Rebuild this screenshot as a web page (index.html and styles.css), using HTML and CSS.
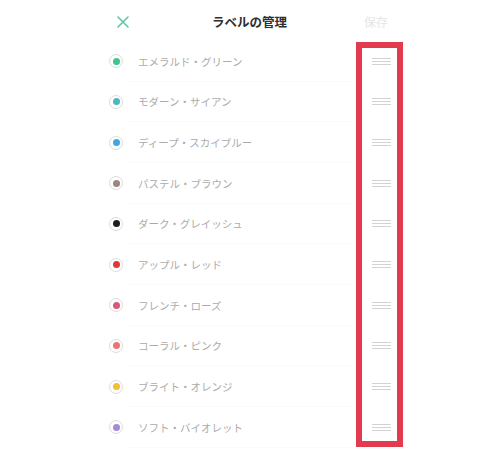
FILE: index.html
```html
<!DOCTYPE html>
<html lang="ja">
<head>
<meta charset="utf-8">
<title>ラベルの管理</title>
<link rel="stylesheet" href="styles.css">
</head>
<body>
<div class="screen">
  <header class="bar">
    <span class="close" aria-label="閉じる">
      <svg width="12" height="12" viewBox="0 0 12 12"><path d="M1 1L11 11M11 1L1 11" stroke="#5dc7a2" stroke-width="1.6" stroke-linecap="round"/></svg>
    </span>
    <h1 class="title">ラベルの管理</h1>
    <span class="save">保存</span>
  </header>
  <ul class="list">
    <li class="row"><span class="radio"><span class="dot c1"></span></span><span class="name">エメラルド・グリーン</span><span class="handle"></span></li>
    <li class="row"><span class="radio"><span class="dot c2"></span></span><span class="name">モダーン・サイアン</span><span class="handle"></span></li>
    <li class="row"><span class="radio"><span class="dot c3"></span></span><span class="name">ディープ・スカイブルー</span><span class="handle"></span></li>
    <li class="row"><span class="radio"><span class="dot c4"></span></span><span class="name">パステル・ブラウン</span><span class="handle"></span></li>
    <li class="row"><span class="radio"><span class="dot c5"></span></span><span class="name">ダーク・グレイッシュ</span><span class="handle"></span></li>
    <li class="row"><span class="radio"><span class="dot c6"></span></span><span class="name">アップル・レッド</span><span class="handle"></span></li>
    <li class="row"><span class="radio"><span class="dot c7"></span></span><span class="name">フレンチ・ローズ</span><span class="handle"></span></li>
    <li class="row"><span class="radio"><span class="dot c8"></span></span><span class="name">コーラル・ピンク</span><span class="handle"></span></li>
    <li class="row"><span class="radio"><span class="dot c9"></span></span><span class="name">ブライト・オレンジ</span><span class="handle"></span></li>
    <li class="row"><span class="radio"><span class="dot c10"></span></span><span class="name">ソフト・バイオレット</span><span class="handle"></span></li>
  </ul>
  <div class="highlight"></div>
</div>
</body>
</html>
```
FILE: styles.css
```css
html, body {
  margin: 0;
  padding: 0;
  background: #ffffff;
}
body {
  font-family: "Noto Sans CJK JP", "Noto Sans", sans-serif;
}
.screen {
  position: relative;
  width: 300px;
  height: 450px;
  margin: 0 auto;
}
.bar {
  height: 41px;
  display: flex;
  align-items: center;
  justify-content: space-between;
  padding: 2px 10px 0 17px;
  box-sizing: border-box;
}
.close {
  width: 12px;
  height: 12px;
  display: flex;
}
.title {
  margin: 0 0 0 6px;
  font-size: 12.5px;
  font-weight: 700;
  color: #2e2e2e;
  letter-spacing: 0;
}
.save {
  font-size: 12px;
  color: #e6e6e6;
  width: 26px;
}
.list {
  list-style: none;
  margin: 0;
  padding: 0;
}
.row {
  height: 40.67px;
  display: flex;
  align-items: center;
  padding: 0 9px;
  box-sizing: border-box;
  position: relative;
}
.row::after {
  content: "";
  position: absolute;
  left: 28px;
  right: 48px;
  bottom: 0;
  height: 1px;
  background: #fbfbfb;
}
.radio {
  width: 14px;
  height: 14px;
  border: 1px solid #dddddd;
  border-radius: 50%;
  box-sizing: border-box;
  display: flex;
  align-items: center;
  justify-content: center;
  flex: none;
}
.dot {
  width: 7px;
  height: 7px;
  border-radius: 50%;
}
.c1 { background: #3ec48c; }
.c2 { background: #4cb8bf; }
.c3 { background: #42a6e0; }
.c4 { background: #9b8683; }
.c5 { background: #1e1e1e; }
.c6 { background: #d93b3b; }
.c7 { background: #d8587b; }
.c8 { background: #ec7474; }
.c9 { background: #f0c03a; }
.c10 { background: #a68ad2; }
.name {
  margin-left: 15px;
  font-size: 10.5px;
  color: #ababab;
  flex: 1;
}
.handle {
  width: 19px;
  height: 7px;
  border-top: 1px solid #d3d3d3;
  border-bottom: 1px solid #d3d3d3;
  box-sizing: border-box;
  position: relative;
  flex: none;
}
.handle::before {
  content: "";
  position: absolute;
  left: 0;
  right: 0;
  top: 2px;
  height: 1px;
  background: #d3d3d3;
}
.highlight {
  position: absolute;
  left: 256px;
  top: 42px;
  width: 47px;
  height: 405px;
  border: 6px solid #e23a4f;
  box-sizing: border-box;
}
```
